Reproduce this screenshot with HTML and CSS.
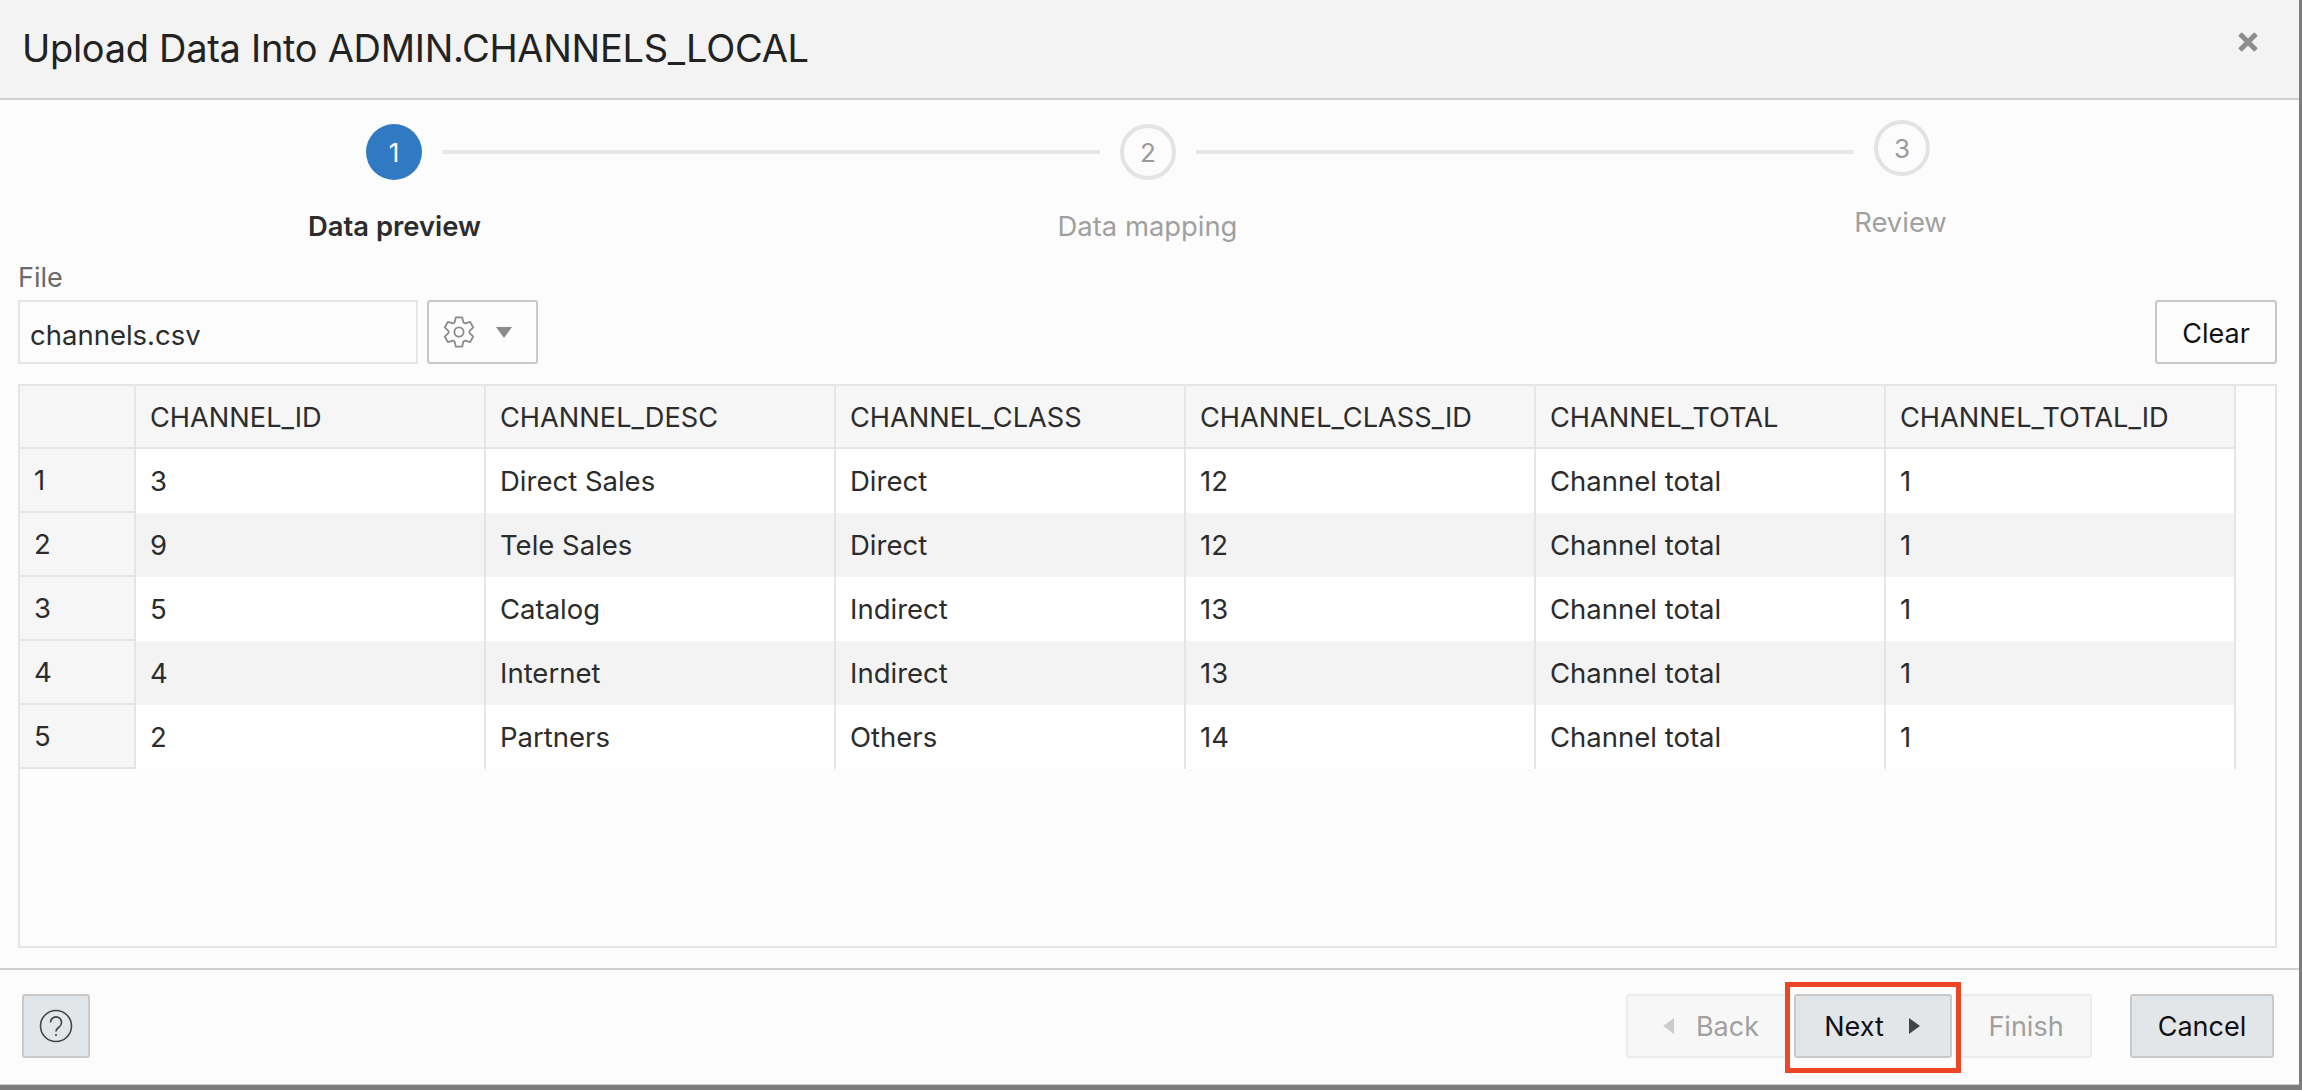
FILE: index.html
```html
<!DOCTYPE html>
<html lang="en">
<head>
    <meta charset="UTF-8">
    <title>Upload Data Into ADMIN.CHANNELS_LOCAL</title>
    <link rel="stylesheet" href="styles.css">
</head>
<body>
    <div class="dialog">
        <!-- Header -->
        <header class="dialog-header">
            <h1>Upload Data Into ADMIN.CHANNELS_LOCAL</h1>
            <svg class="close-icon" width="20" height="20" viewBox="0 0 20 20">
                <path d="M2 2 L18 18 M18 2 L2 18"/>
            </svg>
        </header>

        <main class="dialog-body">
            <!-- Steps -->
            <div class="train">
                <span class="step-dot step-active">1</span>
                <span class="step-line"></span>
                <span class="step-dot">2</span>
                <span class="step-line"></span>
                <span class="step-dot step-raised">3</span>
            </div>
            <div class="train-labels">
                <span class="step-label step-label-active">Data preview</span>
                <span class="step-label">Data mapping</span>
                <span class="step-label step-raised-label">Review</span>
            </div>

            <!-- File row -->
            <label class="file-label" for="file">File</label>
            <div class="file-row">
                <input class="file-input" id="file" type="text" value="channels.csv">
                <button class="btn btn-settings" type="button">
                    <svg class="gear-icon" width="32" height="32" viewBox="0 0 32 32">
                        <path d="M11.56 6.48 12.88 1.33H19.12L20.44 6.48 22.02 7.4 27.15 5.96 30.27 11.36 26.46 15.08V16.92L30.27 20.64 27.15 26.04 22.02 24.6 20.44 25.52 19.12 30.67H12.88L11.56 25.52 9.98 24.6 4.85 26.04 1.73 20.64 5.54 16.92V15.08L1.73 11.36 4.85 5.96 9.98 7.4Z"/>
                        <circle cx="16" cy="16" r="4.6"/>
                    </svg>
                    <svg width="16" height="11" viewBox="0 0 16 11"><path class="caret" d="M0 0H16L8 11Z"/></svg>
                </button>
                <button class="btn btn-clear" type="button">Clear</button>
            </div>

            <!-- Preview table -->
            <div class="preview">
                <table class="preview-table">
                    <thead>
                        <tr>
                            <th class="row-head"></th>
                            <th>CHANNEL_ID</th>
                            <th>CHANNEL_DESC</th>
                            <th>CHANNEL_CLASS</th>
                            <th>CHANNEL_CLASS_ID</th>
                            <th>CHANNEL_TOTAL</th>
                            <th>CHANNEL_TOTAL_ID</th>
                        </tr>
                    </thead>
                    <tbody>
                        <tr>
                            <th class="row-head">1</th>
                            <td>3</td><td>Direct Sales</td><td>Direct</td><td>12</td><td>Channel total</td><td>1</td>
                        </tr>
                        <tr>
                            <th class="row-head">2</th>
                            <td>9</td><td>Tele Sales</td><td>Direct</td><td>12</td><td>Channel total</td><td>1</td>
                        </tr>
                        <tr>
                            <th class="row-head">3</th>
                            <td>5</td><td>Catalog</td><td>Indirect</td><td>13</td><td>Channel total</td><td>1</td>
                        </tr>
                        <tr>
                            <th class="row-head">4</th>
                            <td>4</td><td>Internet</td><td>Indirect</td><td>13</td><td>Channel total</td><td>1</td>
                        </tr>
                        <tr>
                            <th class="row-head">5</th>
                            <td>2</td><td>Partners</td><td>Others</td><td>14</td><td>Channel total</td><td>1</td>
                        </tr>
                    </tbody>
                </table>
            </div>
        </main>

        <!-- Footer -->
        <footer class="dialog-footer">
            <button class="btn btn-shaded btn-help" type="button">
                <svg class="help-icon" width="34" height="34" viewBox="0 0 34 34">
                    <circle cx="17" cy="17" r="15.5"/>
                    <path d="M11.5 13.5a5.5 5.5 0 1 1 8.6 4.5c-2 1.4-3.1 2.4-3.1 4.5"/>
                    <circle class="help-dot" cx="17" cy="26" r="1.1"/>
                </svg>
            </button>
            <div class="footer-actions">
                <div class="nav-group">
                    <button class="btn btn-disabled btn-back" type="button">
                        <svg width="11" height="16" viewBox="0 0 11 16"><path class="arrow-off" d="M11 0V16L0 8Z"/></svg>
                        Back
                    </button>
                    <button class="btn btn-shaded btn-next" type="button">
                        Next
                        <svg width="11" height="16" viewBox="0 0 11 16"><path class="arrow-on" d="M0 0V16L11 8Z"/></svg>
                    </button>
                    <button class="btn btn-disabled btn-finish" type="button">Finish</button>
                </div>
                <button class="btn btn-shaded btn-cancel" type="button">Cancel</button>
            </div>
        </footer>
    </div>
</body>
</html>
```

FILE: styles.css
```css
/* Global Styles */
body {
    margin: 0;
    height: 1090px;
    overflow: hidden;
    background-color: #7c7c7c;
    font-family: 'Inter', 'Liberation Sans', sans-serif;
    color: #2c2c2c;
}

/* Dialog */
.dialog {
    width: 2299px;
    height: 1085px;
    box-sizing: border-box;
    display: flex;
    flex-direction: column;
    background-color: #fcfcfc;
    border-bottom: 1px solid #d0d0d0;
}

.dialog-header {
    height: 100px;
    flex: none;
    box-sizing: border-box;
    display: flex;
    align-items: center;
    justify-content: space-between;
    padding: 0 41px 2px 22px;
    background-color: #f3f3f3;
    border-bottom: 2px solid #cfcfcf;
}

.dialog-header h1 {
    margin: 0;
    font-size: 38px;
    font-weight: 400;
    letter-spacing: -0.3px;
    color: #222;
}

.close-icon {
    margin-bottom: 12px;
}

.close-icon path {
    fill: none;
    stroke: #8c8c8c;
    stroke-width: 5;
}

.dialog-body {
    flex: 1;
    padding: 24px 22px 20px 18px;
}

/* Steps */
.train {
    display: flex;
    align-items: center;
    padding-left: 348px;
    padding-right: 347px;
}

.step-dot {
    width: 56px;
    height: 56px;
    flex: none;
    box-sizing: border-box;
    display: flex;
    align-items: center;
    justify-content: center;
    border: 4px solid #e3e3e3;
    border-radius: 50%;
    background-color: #fcfcfc;
    font-size: 26px;
    color: #9a9a9a;
}

.step-active {
    border: none;
    background-color: #317ac3;
    color: #ffffff;
}

.step-raised {
    margin-top: -8px;
}

.step-line {
    flex: 1;
    height: 4px;
    margin: 0 20px;
    background-color: #e7e7e7;
}

.train-labels {
    display: grid;
    grid-template-columns: repeat(3, 753px);
    margin-top: 30px;
}

.step-label {
    font-size: 27.4px;
    line-height: 32px;
    text-align: center;
    color: #a0a0a0;
}

.step-label-active {
    font-weight: 600;
    color: #2c2c2c;
}

.step-raised-label {
    margin-top: -4px;
}

/* File row */
.file-label {
    display: block;
    margin-top: 20px;
    font-size: 27px;
    line-height: 32px;
    color: #6a6a6a;
}

.file-row {
    display: flex;
    gap: 9px;
    margin-top: 6px;
}

.file-input {
    width: 400px;
    height: 64px;
    box-sizing: border-box;
    padding: 6px 10px 0;
    border: 2px solid #e5e5e5;
    background-color: #fcfcfc;
    font-family: inherit;
    font-size: 27.5px;
    color: #2c2c2c;
}

.btn {
    height: 64px;
    box-sizing: border-box;
    display: flex;
    align-items: center;
    justify-content: center;
    padding: 0;
    border: 2px solid #c9c9c9;
    border-radius: 3px;
    background-color: #fdfdfd;
    font-family: inherit;
    font-size: 27px;
    color: #111;
}

.btn-settings {
    width: 111px;
    justify-content: flex-start;
    gap: 21px;
    padding-left: 14px;
}

.gear-icon path,
.gear-icon circle {
    fill: none;
    stroke: #8b8b8b;
    stroke-width: 1.8;
    stroke-linejoin: round;
}

.caret {
    fill: #8b8b8b;
}

.btn-clear {
    width: 122px;
    margin-left: auto;
    padding-top: 3px;
}

/* Preview table */
.preview {
    height: 564px;
    box-sizing: border-box;
    margin-top: 20px;
    border: 2px solid #e5e5e5;
}

.preview-table {
    width: 2216px;
    table-layout: fixed;
    border-collapse: separate;
    border-spacing: 0;
    font-size: 27.5px;
}

.preview-table th,
.preview-table td {
    box-sizing: border-box;
    height: 64px;
    padding: 0 14px;
    text-align: left;
    font-weight: 400;
    color: #2c2c2c;
    border-right: 2px solid #e5e5e5;
}

.preview-table thead th {
    height: 63px;
    padding-top: 2px;
    font-size: 27.2px;
    background-color: #f6f6f6;
    border-bottom: 2px solid #e5e5e5;
}

.preview-table td {
    background-color: #ffffff;
}

.preview-table tbody tr:nth-child(even) td {
    background-color: #f3f3f3;
}

.preview-table .row-head {
    width: 116px;
    background-color: #f6f6f6;
    border-bottom: 2px solid #e5e5e5;
}

/* Footer */
.dialog-footer {
    flex: none;
    height: 116px;
    box-sizing: border-box;
    display: flex;
    align-items: flex-start;
    justify-content: space-between;
    padding: 24px 25px 0 22px;
    border-top: 2px solid #cfcfcf;
}

.btn-shaded {
    background-color: #e3e6e9;
}

.btn-help {
    width: 68px;
}

.help-icon circle,
.help-icon path {
    fill: none;
    stroke: #444;
    stroke-width: 1.6;
}

.help-icon .help-dot {
    fill: #444;
    stroke: none;
}

.footer-actions {
    display: flex;
    gap: 38px;
}

.nav-group {
    display: flex;
}

.btn-disabled {
    border-color: #ececec;
    background-color: #f7f7f7;
    color: #a0a0a0;
}

.btn-back {
    width: 168px;
    gap: 22px;
    border-right: none;
}

.arrow-off {
    fill: #cccccc;
}

.btn-next {
    position: relative;
    width: 158px;
    gap: 25px;
    padding-right: 2px;
    box-shadow: 0 0 0 4px #fcfcfc;
}

/* red callout drawn over the screenshot */
.btn-next::after {
    content: "";
    position: absolute;
    top: -14px;
    right: -11px;
    bottom: -17px;
    left: -11px;
    border: 5px solid #ee4527;
}

.arrow-on {
    fill: #444;
}

.btn-finish {
    width: 140px;
    padding-left: 10px;
    border-left: none;
}

.btn-cancel {
    width: 144px;
}
```
